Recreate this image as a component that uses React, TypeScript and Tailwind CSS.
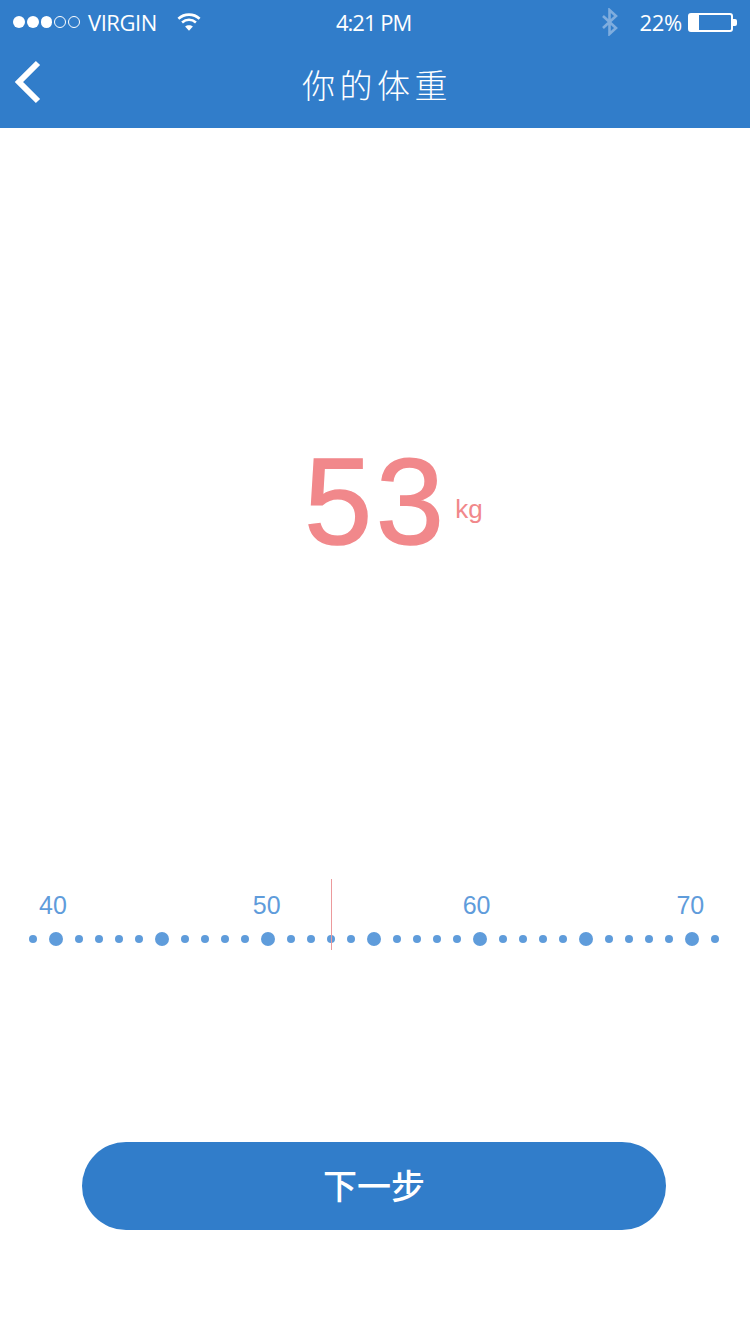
const cjk = "font-['Noto_Sans_CJK_SC',sans-serif]"

// 40 to 72 in one kg steps, big dot every 5th
const dots = [
  0, 1, 0, 0, 0, 0, 1, 0, 0, 0, 0, 1, 0, 0, 0, 0, 1, 0, 0, 0, 0, 1, 0, 0, 0, 0, 1, 0, 0, 0, 0, 1, 0,
]

const SignalDots = () => (
  <div className="flex items-center gap-[2px]">
    {[1, 1, 1].map((_, i) => (
      <span key={i} className="size-[11.8px] rounded-full bg-white" />
    ))}
    {[0, 0].map((_, i) => (
      <span key={i} className="size-[11.8px] rounded-full border border-white" />
    ))}
  </div>
)

const WifiIcon = () => (
  <svg width="24" height="20" viewBox="0 0 26 20" fill="none" stroke="white" strokeWidth="2.8">
    <path d="M1.5 6.5 C8 0.5 18 0.5 24.5 6.5" />
    <path d="M5.5 10.5 C10 6.5 16 6.5 20.5 10.5" />
    <path d="M13 19.5 L8.8 15 C11 13 15 13 17.2 15 Z" fill="white" stroke="none" />
  </svg>
)

const BluetoothIcon = () => (
  <svg width="18" height="28" viewBox="0 0 18 28" fill="none" stroke="#7fadde" strokeWidth="2.6">
    <path d="M2 8 L15 20 L8.5 26 L8.5 2 L15 8 L2 20" />
  </svg>
)

const Battery = () => (
  <div className="flex items-center">
    <div className="flex h-[19px] w-[45px] rounded-[3px] border-2 border-white">
      <div className="w-[9px] bg-white" />
    </div>
    <div className="h-[7px] w-[4px] rounded-r-[2px] bg-white" />
  </div>
)

const StatusBar = () => (
  <div className="flex h-[44px] items-center justify-between font-['Open_Sans',sans-serif] text-[22px] text-white">
    <div className="flex items-center pl-[13px]">
      <SignalDots />
      <span className="ml-[8px] tracking-[-0.45px]">VIRGIN</span>
      <span className="ml-[20px]">
        <WifiIcon />
      </span>
    </div>
    <span className="absolute left-[336px] tracking-[-1px]">4:21 PM</span>
    <div className="flex items-center pr-[13px]">
      <BluetoothIcon />
      <span className="ml-[21px] tracking-[-0.3px]">22%</span>
      <span className="ml-[6px]">
        <Battery />
      </span>
    </div>
  </div>
)

const Header = () => (
  <header className="relative h-[128px] bg-[#317dca]">
    <StatusBar />
    <div className="relative flex h-[84px] items-center justify-center">
      <svg
        className="absolute left-[14px] top-[16px]"
        width="28"
        height="44"
        viewBox="0 0 28 44"
        fill="none"
        stroke="white"
        strokeWidth="6"
      >
        <path d="M24 3 L5 22 L24 41" />
      </svg>
      <h1 className={`${cjk} -mt-[2px] pl-[4px] text-[33px] font-light tracking-[4.5px] text-white`}>你的体重</h1>
    </div>
  </header>
)

const Ruler = () => (
  <div className="relative font-['Liberation_Sans',sans-serif] text-[#5f9cdb]">
    <div className="flex pl-[39px] text-[25px] leading-[30px]">
      <span>40</span>
      <span className="ml-[186px]">50</span>
      <span className="ml-[182px]">60</span>
      <span className="ml-[186px]">70</span>
    </div>
    <div className="mt-[12px] flex items-center gap-3 pl-[29px]">
      {dots.map((big, i) => (
        <span
          key={i}
          className={big ? "size-[14px] rounded-full bg-[#5f9cdb]" : "size-[8px] rounded-full bg-[#5f9cdb]"}
        />
      ))}
    </div>
    {/* needle */}
    <div className="absolute left-[331px] top-[-11px] h-[71px] w-px bg-[#ec9a9c]" />
  </div>
)

export default function App() {
  return (
    <div className="relative h-[1334px] w-[750px] overflow-hidden bg-white">
      <Header />
      <div className="mt-[308px] flex items-start justify-center pl-[37px] font-['Liberation_Sans',sans-serif] text-[#f1888b]">
        <span className="text-[122px] leading-[132px] tracking-[4px] [-webkit-text-stroke:1.5px_#f1888b]">53</span>
        <span className="ml-[7.5px] mt-[53px] text-[26px] leading-[40px]">kg</span>
      </div>
      <div className="mt-[322px]">
        <Ruler />
      </div>
      <div className="mt-[196px] flex justify-center pr-[2px]">
        <button
          className={`${cjk} h-[88px] w-[584px] rounded-full bg-[#317dca] pb-[3px] text-[34px] font-medium text-white`}
        >
          下一步
        </button>
      </div>
    </div>
  )
}
